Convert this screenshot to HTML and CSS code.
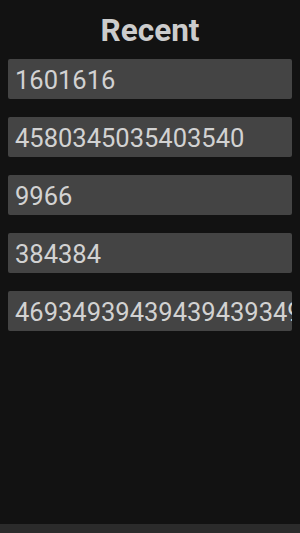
FILE: index.html
```html
<!doctype html>
<html lang="en">
<head>
    <meta charset="UTF-8">
    <title>Recent</title>
    <link rel="stylesheet" href="styles.css">
</head>
<body>
<div class="screen">
    <h1 class="title">Recent</h1>

    <!--最近的号码-->
    <div class="list">
        <div class="item">1601616</div>
        <div class="item">4580345035403540</div>
        <div class="item">9966</div>
        <div class="item">384384</div>
        <div class="item">469349394394394393494</div>
    </div>

    <div class="navbar"></div>
</div>
</body>
</html>
```

FILE: styles.css
```css
html, body {
    margin: 0;
    padding: 0;
    background: #121212;
}

.screen {
    width: 300px;
    height: 533px;
    display: flex;
    flex-direction: column;
    font-family: Roboto, "Liberation Sans", sans-serif;
}

.title {
    margin: 0;
    height: 59px;
    line-height: 61px;
    text-align: center;
    font-size: 31.5px;
    font-weight: bold;
    color: #cccccc;
}

.list {
    flex: 1;
    display: flex;
    flex-direction: column;
    gap: 18px;
    padding: 0 8px;
}

.item {
    height: 40px;
    line-height: 42px;
    background: #444444;
    border-radius: 2px;
    padding-left: 7px;
    font-size: 25.5px;
    color: #d2d2d2;
    white-space: nowrap;
    overflow: hidden;
}

.navbar {
    height: 9px;
    background: #2b2b2b;
}
```
